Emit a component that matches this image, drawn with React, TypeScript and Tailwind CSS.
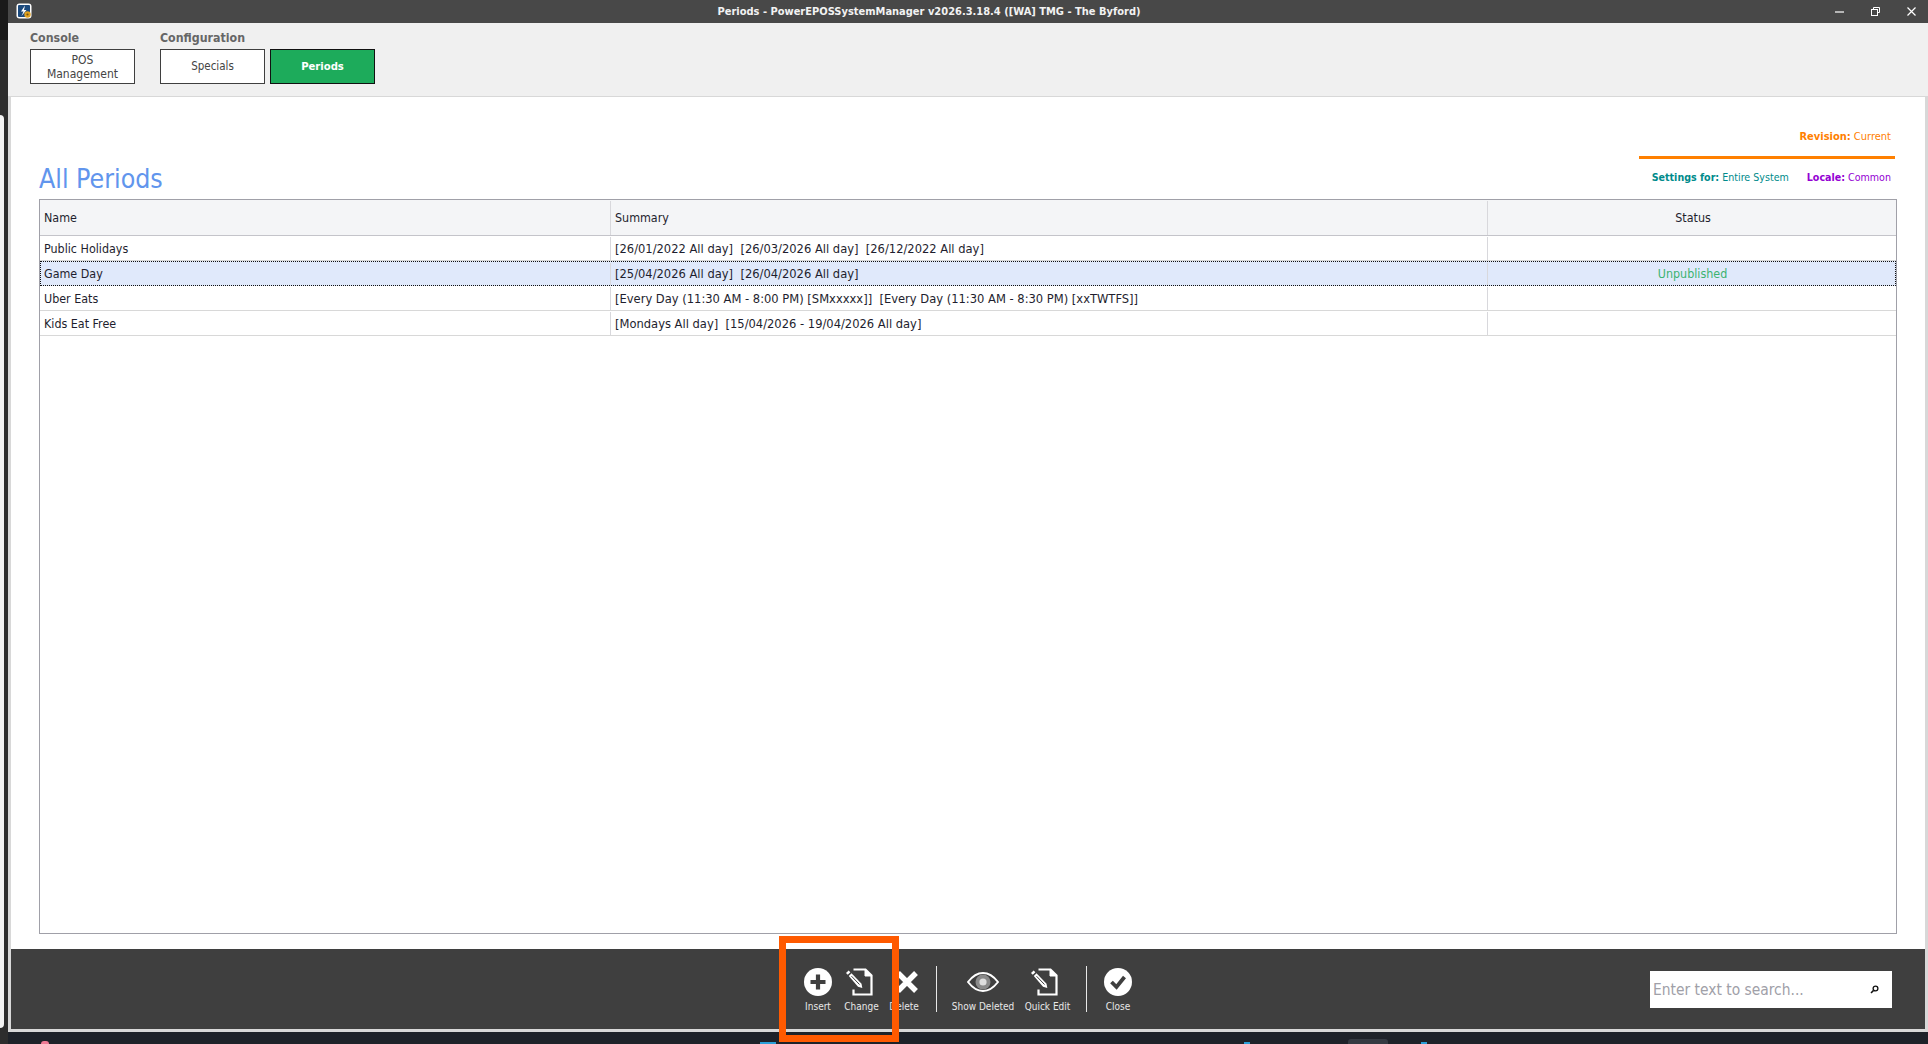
import React from "react";

const FONT = "font-['DejaVu_Sans',sans-serif] [font-stretch:condensed]";

function PlusIcon() {
  return (
    <svg width="28" height="28" viewBox="0 0 28 28">
      <circle cx="14" cy="14" r="14" fill="#fff" />
      <path d="M14 6.5v15M6.5 14h15" stroke="#3f3f3f" strokeWidth="4.2" />
    </svg>
  );
}

function DocPencil() {
  return (
    <svg width="28" height="28" viewBox="0 0 28 28">
      <path d="M8.5 1.5H20.5L26.5 7.5V26.5H8.5V21.5" fill="none" stroke="#fff" strokeWidth="2.2" />
      <path d="M20 1.5V8H26.5" fill="#fff" stroke="#fff" strokeWidth="1" />
      <path d="M1 5l2.600-2.600 1.800 1.800-2.600 2.600z" fill="#fff" />
      <path d="M3.800 8l2.700-2.700 10 10.400.8 4.300-4.300-1.300z" fill="#fff" />
      <path d="M6.500 8.200l8 8.300" stroke="#3f3f3f" strokeWidth="1" />
    </svg>
  );
}

function CrossIcon() {
  return (
    <svg width="24" height="24" viewBox="0 0 24 24">
      <path d="M3 3l18 18M21 3L3 21" stroke="#fff" strokeWidth="5.4" />
    </svg>
  );
}

function EyeIcon() {
  return (
    <svg width="32" height="20" viewBox="0 0 32 20">
      <path d="M1 10C6 3.500 11 1 16 1s10 2.500 15 9c-5 6.500-10 9-15 9S6 16.500 1 10z" fill="#3f3f3f" stroke="#fff" strokeWidth="2" />
      <circle cx="16" cy="10" r="7.500" fill="#8a8a8a" />
      <circle cx="16" cy="10" r="3.600" fill="#dedede" />
    </svg>
  );
}

function CheckIcon() {
  return (
    <svg width="28" height="28" viewBox="0 0 28 28">
      <circle cx="14" cy="14" r="14" fill="#fff" />
      <path d="M7.500 14l5 5 8-10" fill="none" stroke="#3f3f3f" strokeWidth="3.800" />
    </svg>
  );
}

function Logo() {
  return (
    <svg width="16" height="16" viewBox="0 0 16 16">
      <rect x="0.500" y="0.500" width="15" height="15" rx="3" fill="#fff" />
      <rect x="2" y="2" width="12" height="12" rx="1" fill="#1c4a7d" />
      <path d="M9 2.500L5 8.500h2.500L5.500 13l5-6H8z" fill="#fff" />
      <circle cx="11.500" cy="11.500" r="3.200" fill="#e0a020" />
      <circle cx="11.500" cy="11.500" r="1.100" fill="#7a5a10" />
    </svg>
  );
}

function SearchGlyph() {
  return (
    <svg width="9" height="9" viewBox="0 0 9 9">
      <circle cx="5.500" cy="3.500" r="2.400" fill="none" stroke="#111" strokeWidth="1.300" />
      <path d="M3.600 5.400L1 8" stroke="#111" strokeWidth="1.500" />
    </svg>
  );
}

function Tool({ icon, label, w, labelClass = "" }: { icon: React.ReactNode; label: string; w: string; labelClass?: string }) {
  return (
    <div className={`flex flex-col items-center ${w}`}>
      <div className="flex h-[32px] items-center justify-center">{icon}</div>
      <div className={`mt-[2px] whitespace-nowrap text-[10px] leading-[14px] text-[#e8e8e8] ${labelClass}`}>{label}</div>
    </div>
  );
}

const rows = [
  { name: "Public Holidays", summary: "[26/01/2022 All day]  [26/03/2026 All day]  [26/12/2022 All day]", status: "" },
  { name: "Game Day", summary: "[25/04/2026 All day]  [26/04/2026 All day]", status: "Unpublished", selected: true },
  { name: "Uber Eats", summary: "[Every Day (11:30 AM - 8:00 PM) [SMxxxxx]]  [Every Day (11:30 AM - 8:30 PM) [xxTWTFS]]", status: "" },
  { name: "Kids Eat Free", summary: "[Mondays All day]  [15/04/2026 - 19/04/2026 All day]", status: "" },
];

export default function App() {
  return (
    <div className={`relative flex h-[1044px] w-[1928px] overflow-hidden bg-[#1e2229] ${FONT}`}>
      {/* sliver of the window behind */}
      <div className="flex h-full w-[8px] shrink-0 flex-col bg-[#2d2d2d]">
        <div className="h-[40px] bg-[#1a1a1a]" />
        <div className="mt-[75px] h-[913px] w-[4px] rounded-r-[4px] bg-[#f3f3f3]" />
      </div>

      <div className="flex min-w-0 flex-1 flex-col">
        {/* title bar */}
        <div className="relative flex h-[23px] shrink-0 items-center justify-center bg-[#484848] pt-[2px] text-[11px] font-bold text-[#f2f2f2]">
          <div className="absolute left-[8px] top-[3px]"><Logo /></div>
          <span className="ml-[-78px]">Periods - PowerEPOSSystemManager v2026.3.18.4 ([WA] TMG - The Byford)</span>
          <div className="absolute right-[12px] top-0 flex h-[23px] items-center gap-[27px]">
            <svg width="9" height="9" viewBox="0 0 9 9"><path d="M0 5h9" stroke="#fff" strokeWidth="1.200" /></svg>
            <svg width="9" height="9" viewBox="0 0 9 9" fill="none" stroke="#fff"><path d="M2.500 2V.5h6v5H7" /><rect x=".5" y="2.500" width="6" height="6" /></svg>
            <svg width="9" height="9" viewBox="0 0 9 9"><path d="M.5.5l8 8M8.500.5l-8 8" stroke="#fff" strokeWidth="1.200" /></svg>
          </div>
        </div>

        {/* ribbon */}
        <div className="flex h-[73px] shrink-0 gap-[25px] bg-[#f0f0f0] pl-[22px] pt-[8px]">
          <div className="flex flex-col">
            <div className="mb-[4px] text-[12.300px] font-bold leading-[14px] text-[#666666]">Console</div>
            <div className="flex h-[35px] w-[105px] items-center justify-center border border-[#3f3f3f] bg-white text-center text-[12px] leading-[14px] text-[#444444]">POS<br />Management</div>
          </div>
          <div className="flex flex-col">
            <div className="mb-[4px] text-[12.300px] font-bold leading-[14px] text-[#666666]">Configuration</div>
            <div className="flex gap-[5px]">
              <div className="flex h-[35px] w-[105px] items-center justify-center border border-[#3f3f3f] bg-white pt-[1px] text-[11.500px] text-[#444444]">Specials</div>
              <div className="flex h-[35px] w-[105px] items-center justify-center border border-[#111111] bg-[#1dab5b] pt-[1px] text-[11.200px] font-bold text-white">Periods</div>
            </div>
          </div>
        </div>

        {/* page */}
        <div className="flex min-h-0 flex-1 flex-col bg-[#d8d8d8] px-[3px] pb-[3px] pt-[1px]">
          <div className="flex min-h-0 flex-1 flex-col bg-white">
            {/* page header */}
            <div className="flex h-[102px] shrink-0 pl-[28px] pr-[30px]">
              <div className="flex-1 pt-[63px] text-[26.500px] leading-[38px] text-[#6195ed]">All Periods</div>
              <div className="flex w-[256px] flex-col">
                <div className="mr-[4px] mt-[33px] text-right text-[11px] leading-[14px] text-[#ff8000]"><b>Revision:</b> Current</div>
                <div className="mt-[12px] h-[3px] bg-[#ff8000]" />
                <div className="mr-[4px] mt-[11px] flex justify-end gap-[18px] text-[10.600px] leading-[14px]">
                  <span className="text-[#008b8b]"><b>Settings for:</b> Entire System</span>
                  <span className="text-[#9400d3]"><b>Locale:</b> Common</span>
                </div>
              </div>
            </div>

            {/* grid */}
            <div className="mx-[28px] flex min-h-0 flex-1 flex-col border border-[#a0a0a8] text-[12.400px] text-[#1e1e2e]">
              <div className="flex h-[36px] shrink-0 items-center border-b border-[#c4c4ca] bg-[#f4f5f7] pt-[1px]">
                <div className="flex h-full w-[571px] items-center border-r border-[#d8d8dc] pl-[4px]">Name</div>
                <div className="flex h-full w-[877px] items-center border-r border-[#d8d8dc] pl-[4px]">Summary</div>
                <div className="flex h-full flex-1 items-center justify-center pl-[2px]">Status</div>
              </div>
              {rows.map((r) => (
                <div
                  key={r.name}
                  className={
                    r.selected
                      ? "flex h-[25px] shrink-0 items-center border border-dotted border-[#111111] bg-[#e0e9fb] pt-[1px]"
                      : "flex h-[25px] shrink-0 items-center border-b border-[#d8d8d8] pt-[1px]"
                  }
                >
                  <div className={`flex h-full items-center border-r border-[#d8d8dc] ${r.selected ? "w-[570px] pl-[3px]" : "w-[571px] pl-[4px] pt-[1px]"}`}>{r.name}</div>
                  <div className="flex h-full w-[877px] items-center whitespace-pre border-r border-[#d8d8dc] pl-[4px] text-[12.800px]">{r.summary}</div>
                  <div className="flex h-full flex-1 items-center justify-center pl-[2px] text-[#3cb371]">{r.status}</div>
                </div>
              ))}
            </div>
            <div className="h-[15px] shrink-0" />

            {/* bottom toolbar */}
            <div className="flex h-[80px] shrink-0 items-center bg-[#3f3f3f] text-white">
              <div className="flex-1" />
              <div className="ml-[44px] mt-[17px] flex items-start self-start">
                <Tool icon={<PlusIcon />} label="Insert" w="w-[40px]" />
                <Tool icon={<DocPencil />} label="Change" w="w-[42px]" labelClass="ml-[5px]" />
                <Tool icon={<CrossIcon />} label="Delete" w="w-[54px]" labelClass="mr-[6px]" />
                <div className="ml-[2px] h-[46px] w-px bg-[#e8e8e8]" />
                <Tool icon={<EyeIcon />} label="Show Deleted" w="w-[80px] ml-[6px]" />
                <Tool icon={<DocPencil />} label="Quick Edit" w="w-[42px]" labelClass="ml-[7px]" />
                <div className="ml-[21px] h-[46px] w-px bg-[#e8e8e8]" />
                <Tool icon={<CheckIcon />} label="Close" w="w-[62px]" />
              </div>
              <div className="flex flex-1 justify-end pr-[33px]">
                <div className="flex h-[37px] w-[242px] items-center justify-between bg-white pl-[3px] pr-[13px]">
                  <span className="pt-[4px] text-[15.400px] text-[#a0a0a8]">Enter text to search...</span>
                  <SearchGlyph />
                </div>
              </div>
            </div>
          </div>
        </div>

        {/* edge of the taskbar below */}
        <div className="relative h-[12px] shrink-0 bg-[#1e2229]">
          <div className="absolute left-[33px] top-[9px] h-[3px] w-[8px] rounded-t-full bg-[#f07a95]" />
          <div className="absolute left-[752px] top-[10px] h-[2px] w-[16px] bg-[#2a9fd8]" />
          <div className="absolute left-[1236px] top-[10px] h-[2px] w-[6px] bg-[#2a9fd8]" />
          <div className="absolute left-[1340px] top-[7px] h-[5px] w-[40px] rounded-t-[3px] bg-[#353a42]" />
          <div className="absolute left-[1413px] top-[10px] h-[2px] w-[6px] bg-[#2a9fd8]" />
        </div>
      </div>

      {/* annotation drawn on the screenshot */}
      <div className="absolute left-[779px] top-[936px] h-[106px] w-[120px] border-[7px] border-[#ff5a00]" />
    </div>
  );
}
